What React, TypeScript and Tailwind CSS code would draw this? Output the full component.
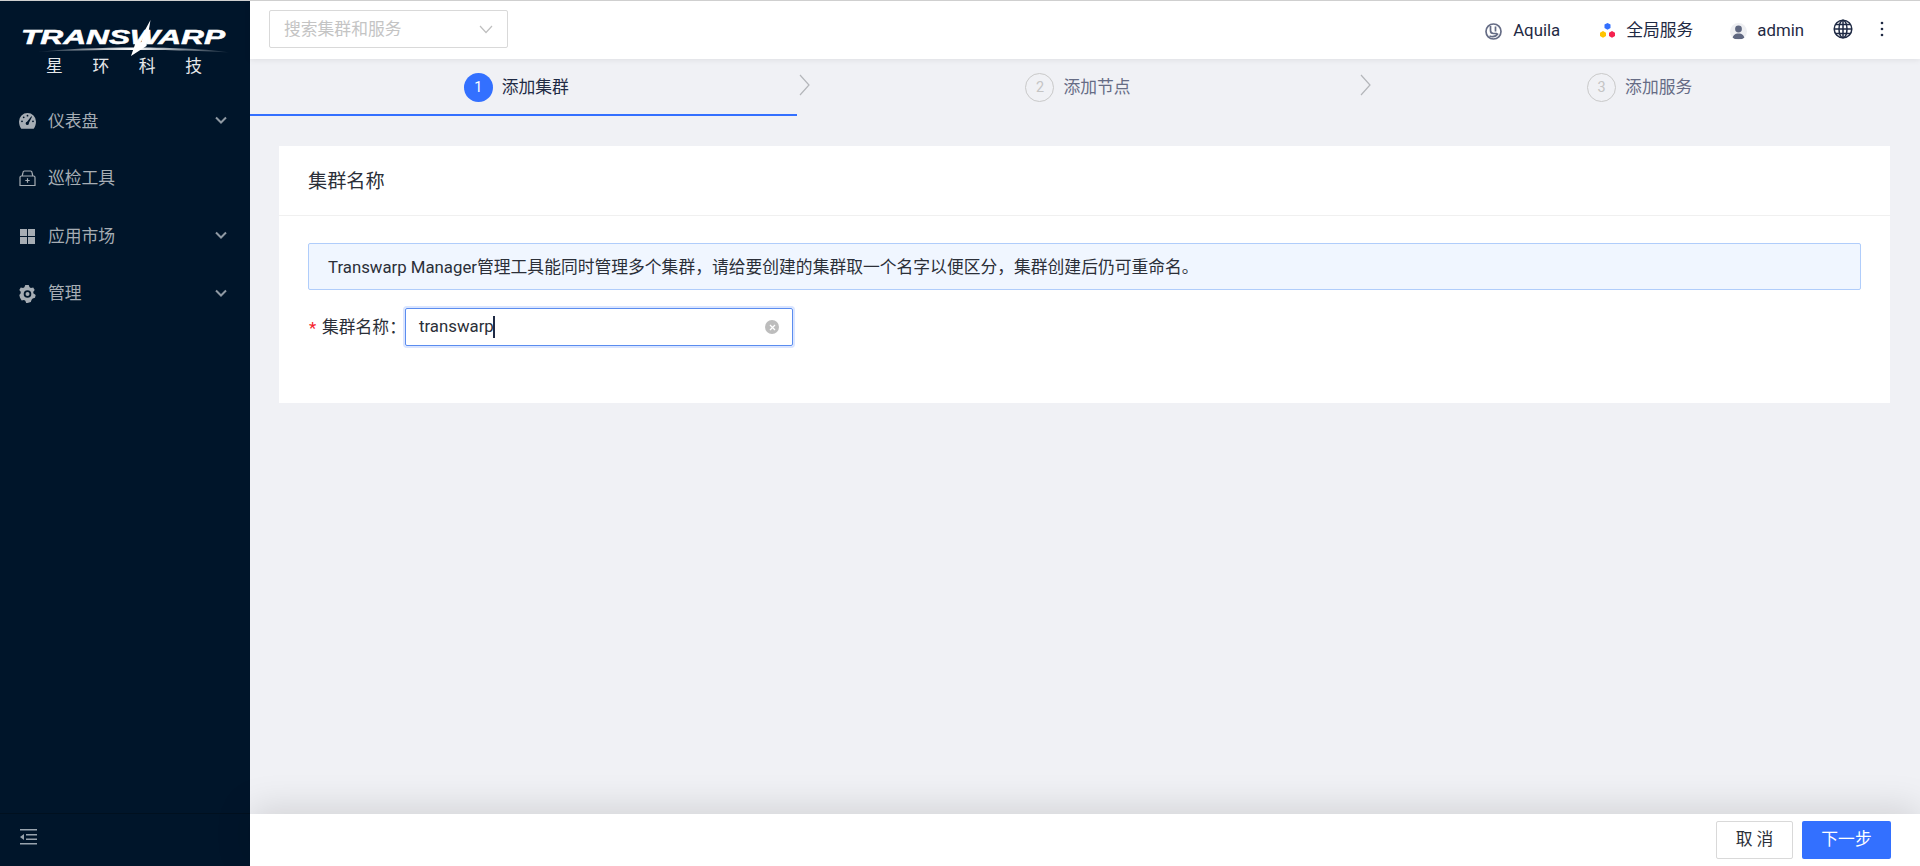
import React from "react";

const FONT = 'Roboto,"Noto Sans CJK SC","Noto Sans",sans-serif';

function Gauge() {
  return (
    <svg width="17" height="16" viewBox="0 0 17 16" className="block">
      <path fillRule="evenodd" fill="#a6adb4" d="M8.500 0a8.500 8.500 0 0 1 8.500 8.500c0 2.800-.9 5.500-2.300 7.300H2.300C.9 14 0 11.300 0 8.500A8.500 8.500 0 0 1 8.500 0ZM8.500 1.800a.9.9 0 1 0 0 1.800.9.9 0 0 0 0-1.800ZM3 7.400a.9.900 0 1 0 0 1.800.9.9 0 0 0 0-1.800ZM4.700 3.400a.9.9 0 1 0 0 1.800.9.9 0 0 0 0-1.800ZM12.400 3.300L8 8.800a1.600 1.600 0 1 0 1.900 1.300l3.100-6.400ZM14 7.400a.9.900 0 1 0 0 1.800.9.9 0 0 0 0-1.800Z" />
    </svg>
  );
}
function Kit() {
  return (
    <svg width="17" height="17" viewBox="0 0 17 17" fill="none" stroke="#a6adb4" strokeWidth="1.200" className="block">
      <path d="M1 15.500V7.500A1.500 1.500 0 0 1 2.500 6h12A1.500 1.500 0 0 1 16 7.500v8Z" />
      <path d="M3.200 6L4 2.400A1.500 1.500 0 0 1 5.500 1h6A1.500 1.500 0 0 1 13 2.400L13.800 6" />
      <path d="M8.500 8.300v4.400M6.300 10.500h4.400" />
    </svg>
  );
}
function Grid4() {
  return (
    <svg width="15" height="15" viewBox="0 0 15 15" fill="#a6adb4" className="block ml-[1px]">
      <rect x="0" y="0" width="7" height="7" />
      <rect x="8" y="0" width="7" height="7" />
      <rect x="0" y="8" width="7" height="7" />
      <rect x="8" y="8" width="7" height="7" />
    </svg>
  );
}
function Gear() {
  return (
    <svg width="17" height="18" viewBox="0 0 17 18" className="block">
      <path fillRule="evenodd" fill="#a6adb4" d="M8.500 0l1.200.1.900 2.200 1.300.7 2.300-.5 1.500 2.400-1.400 1.900v1.500L16.700 10.100 16 12.800l-2.300.6-1.100 1.300-.8 2.200L8.500 18l-1.300-.1-.9-2.200-1.300-.8-2.300.6L1 12.800.3 10.100 1.700 8.200V6.800L.3 4.900 1.800 2.500l2.300.5L5.400 2.300l.9-2.200ZM8.500 5.200a3.800 3.800 0 1 0 0 7.600 3.800 3.800 0 0 0 0-7.600ZM8.500 7a2 2 0 1 1 0 4 2 2 0 0 1 0-4Z" />
    </svg>
  );
}
function Chevron() {
  return (
    <svg width="12" height="8" viewBox="0 0 12 8" fill="none" stroke="#8f99a3" strokeWidth="2" className="block">
      <path d="M1 1.500l5 5 5-5" />
    </svg>
  );
}

function SideItem({ icon, label, arrow }: { icon: React.ReactNode; label: string; arrow?: boolean }) {
  return (
    <div className="h-[57.600px] flex items-center pl-[19px] pr-[23px] text-[16.800px] text-[#a6adb4]">
      <span className="w-[29px] flex items-center">{icon}</span>
      <span className="flex-1">{label}</span>
      {arrow && (
        <span className="flex -mt-[3px]">
          <Chevron />
        </span>
      )}
    </div>
  );
}

function Logo() {
  return (
    <div className="h-[91.500px] pt-[18px]">
      <svg width="250" height="40" viewBox="0 0 250 40" className="block">
        <defs>
          <linearGradient id="sw" x1="0" x2="1" y1="0" y2="0">
            <stop offset="0" stopColor="#fff" stopOpacity="0.05" />
            <stop offset="0.5" stopColor="#fff" />
            <stop offset="1" stopColor="#fff" stopOpacity="0.05" />
          </linearGradient>
        </defs>
        <text
          x="21"
          y="24.500"
          fontFamily='"Liberation Sans",sans-serif'
          fontWeight="700"
          fontStyle="italic"
          fontSize="19.500"
          textLength="204"
          lengthAdjust="spacingAndGlyphs"
          fill="#fff"
          stroke="#fff"
          strokeWidth="0.500"
        >
          TRANSWARP
        </text>
        <path d="M37 33C90 27 190 27 229 33.500C190 30.500 90 30 37 33Z" fill="url(#sw)" />
        <path d="M150.500 1L148 16L146.500 27L131 37L135.500 24L141.500 23L144.500 12Z" fill="#fff" />
      </svg>
      <div className="flex justify-between ml-[46px] w-[156px] -mt-[2px] text-[16.800px] leading-[18px] text-[#e6e8ea]">
        <span>星</span>
        <span>环</span>
        <span>科</span>
        <span>技</span>
      </div>
    </div>
  );
}

function Sidebar() {
  return (
    <aside className="w-[250px] shrink-0 bg-[#00152a] flex flex-col">
      <Logo />
      <SideItem icon={<Gauge />} label="仪表盘" arrow />
      <SideItem icon={<Kit />} label="巡检工具" />
      <SideItem icon={<Grid4 />} label="应用市场" arrow />
      <SideItem icon={<Gear />} label="管理" arrow />
      <div className="mt-auto h-[53px] border-t border-[#00101f] flex items-center pl-[20px] pb-[6px]">
        <svg width="18" height="16" viewBox="0 0 18 16" fill="#98a3ad" className="block">
          <rect x="0" y="0" width="17" height="1.500" />
          <rect x="6" y="5" width="11" height="1.500" />
          <rect x="6" y="9.500" width="11" height="1.500" />
          <rect x="0" y="14" width="17" height="1.500" />
          <path d="M4 5L0 8l4 3Z" />
        </svg>
      </div>
    </aside>
  );
}

function Header() {
  return (
    <header className="h-[58px] shrink-0 bg-white flex items-center pl-[19px] pr-[36px] shadow-[0_1px_6px_rgba(0,0,0,0.08)] relative z-10 text-[16.800px] text-[#1f2a44]">
      <div className="w-[239px] h-[38px] border border-[#d9d9d9] rounded-[2px] flex items-center justify-between pl-[14px] pr-[14px] -mt-[2px]">
        <span className="text-[#c4c4c4] pt-[1px]">搜索集群和服务</span>
        <svg width="14" height="9" viewBox="0 0 14 9" fill="none" stroke="#bfbfbf" strokeWidth="1.200">
          <path d="M1 1l6 6.500L13 1" />
        </svg>
      </div>
      <div className="ml-auto flex items-center mt-[2px]">
        <svg width="17" height="17" viewBox="0 0 17 17" fill="none" stroke="#656c85" strokeWidth="1.700">
          <circle cx="8.500" cy="8.500" r="7.500" />
          <path d="M5.500 3v4.500a3 3 0 0 0 3 3h3.500M10.500 3.500v5M4.500 13c3 1.200 6.500.5 8.500-2.500" />
        </svg>
        <span className="ml-[11px]">Aquila</span>
        <svg width="17" height="16" viewBox="0 0 17 16" className="ml-[39px]">
          <path d="M8.500 0l3 1.600v3.400l-3 1.700-3-1.700V1.600Z" fill="#3370ff" />
          <path d="M4 8l3 1.700v3.400L4 14.800l-3-1.700V9.700Z" fill="#ffc400" />
          <path d="M13 8l3 1.700v3.400l-3 1.700-3-1.700V9.700Z" fill="#f5224f" />
        </svg>
        <span className="ml-[10px]">全局服务</span>
        <span className="ml-[37px] w-[17px] h-[17px] rounded-full bg-[#eeeff2] overflow-hidden flex justify-center">
          <svg width="17" height="17" viewBox="0 0 17 17" fill="#5f6780">
            <circle cx="8.500" cy="6" r="3.400" />
            <path d="M2.500 16c0-3.500 2.500-5.500 6-5.500s6 2 6 5.500Z" />
          </svg>
        </span>
        <span className="ml-[10px]">admin</span>
        <svg width="20" height="20" viewBox="0 0 20 20" fill="none" stroke="#1f2a44" strokeWidth="1.500" className="ml-[29px] -mt-[4px]">
          <circle cx="10" cy="10" r="8.800" />
          <ellipse cx="10" cy="10" rx="4" ry="8.800" />
          <path d="M10 1.200v17.600M1.200 10h17.600M2.500 5.500h15M2.500 14.500h15" />
        </svg>
        <svg width="4" height="16" viewBox="0 0 4 16" fill="#1f2a44" className="ml-[27px] -mt-[4px]">
          <circle cx="2" cy="2" r="1.300" />
          <circle cx="2" cy="8" r="1.300" />
          <circle cx="2" cy="14" r="1.300" />
        </svg>
      </div>
    </header>
  );
}

function Step({ n, label, active }: { n: number; label: string; active?: boolean }) {
  return (
    <div className={"h-[57px] flex-1 flex items-center justify-center pr-[14px] pt-[2px] " + (active ? "border-b-2 border-[#3370ff]" : "border-b-2 border-transparent")}>
      <span
        className={
          "w-[29px] h-[29px] rounded-full flex items-center justify-center text-[14.400px] " +
          (active ? "bg-[#3370ff] text-white" : "border border-[#c9c9c9] text-[#c4c4c4]")
        }
      >
        {n}
      </span>
      <span className={"ml-[9px] text-[16.800px] " + (active ? "text-[#1f2a44]" : "text-[#666c85]")}>{label}</span>
    </div>
  );
}

function StepArrow() {
  return (
    <svg width="15" height="22" viewBox="0 0 15 22" fill="none" stroke="#b4b6ba" strokeWidth="1.200" className="shrink-0 -mt-[6px] self-center">
      <path d="M3 1l9 10-9 10" />
    </svg>
  );
}

function Card() {
  return (
    <section className="ml-[29px] mr-[30px] mt-[30px] bg-white h-[257px]">
      <div className="h-[70px] border-b border-[#f0f0f0] flex items-center pl-[29px] pt-[4px] text-[19.200px] text-[#2b2f38]">集群名称</div>
      <div className="px-[29px] pt-[27px]">
        <div className="h-[47px] bg-[#f0f6ff] border border-[#b0cdfb] rounded-[2px] flex items-center pl-[19px] pt-[3px] text-[16.800px] text-[#2b2f38]">
          Transwarp Manager管理工具能同时管理多个集群，请给要创建的集群取一个名字以便区分，集群创建后仍可重命名。
        </div>
        <div className="mt-[18px] flex items-center text-[16.800px] text-[#2b2f38]">
          <span className="text-[#f5222d] w-[14px] leading-none pl-[1px] pt-[2px]">*</span>
          <span className="w-[83px] whitespace-nowrap pt-[2px]">集群名称：</span>
          <div className="w-[388px] h-[38px] border border-[#5b8def] rounded-[2px] shadow-[0_0_0_2px_rgba(51,112,255,0.18)] flex items-center pl-[13px] pr-[13px]">
            <span>transwarp</span>
            <span className="w-[2px] h-[22px] bg-[#1f2a44] -ml-[1px]" />
            <span className="ml-auto w-[14px] h-[14px] rounded-full bg-[#bdbdbd] flex items-center justify-center">
              <svg width="7" height="7" viewBox="0 0 7 7" stroke="#fff" strokeWidth="1.300">
                <path d="M1 1l5 5M6 1L1 6" />
              </svg>
            </span>
          </div>
        </div>
      </div>
    </section>
  );
}

function Footer() {
  return (
    <footer className="h-[52px] shrink-0 bg-white flex items-center justify-end pr-[29px] gap-[9px] shadow-[0_-6px_36px_rgba(0,0,0,0.13)] relative text-[16.800px]">
      <button className="w-[77px] h-[38px] border border-[#d9d9d9] rounded-[2px] bg-white text-[#2b2f38] tracking-[4px] pl-[4px]">取消</button>
      <button className="w-[89px] h-[38px] rounded-[2px] bg-[#3370ff] text-white">下一步</button>
    </footer>
  );
}

export default function App() {
  return (
    <div className="h-screen w-full flex flex-col bg-[#f0f1f5] overflow-hidden border-t border-[#cfcfcf]" style={{ fontFamily: FONT }}>
      <div className="flex-1 flex min-h-0">
        <Sidebar />
        <div className="flex-1 min-w-0 flex flex-col">
          <Header />
          <main className="flex-1 min-h-0">
            <div className="flex items-center">
              <Step n={1} label="添加集群" active />
              <StepArrow />
              <Step n={2} label="添加节点" />
              <StepArrow />
              <Step n={3} label="添加服务" />
            </div>
            <Card />
          </main>
          <Footer />
        </div>
      </div>
    </div>
  );
}
